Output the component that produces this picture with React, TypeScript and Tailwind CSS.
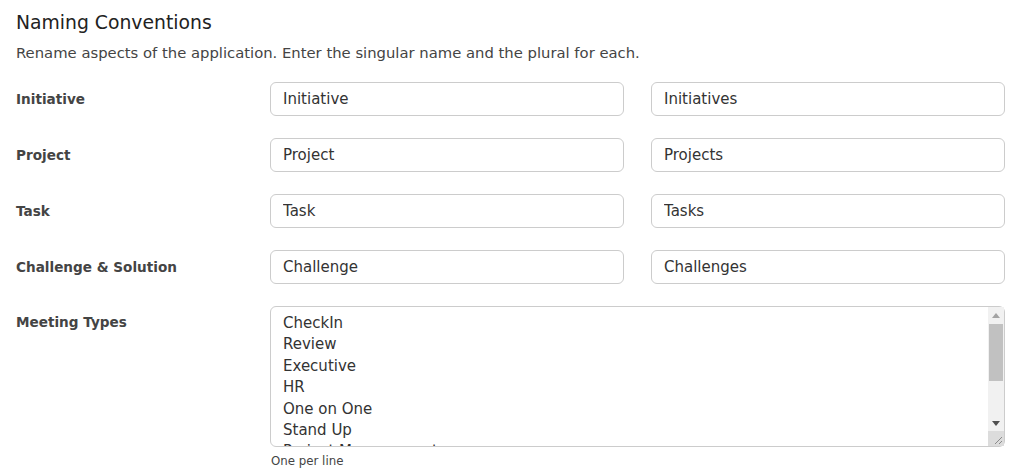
const rows = [
  { label: "Initiative", singular: "Initiative", plural: "Initiatives" },
  { label: "Project", singular: "Project", plural: "Projects" },
  { label: "Task", singular: "Task", plural: "Tasks" },
  { label: "Challenge & Solution", singular: "Challenge", plural: "Challenges" },
]

const meetingTypes = ["CheckIn", "Review", "Executive", "HR", "One on One", "Stand Up", "Project Management", "Board"].join("\n")

// fake classic scrollbar drawn over the textarea's right edge
const Scrollbar = () => (
  <div className="absolute top-px right-px bottom-px flex w-[16px] flex-col bg-[#f1f1f1]">
    <div className="flex h-[16px] items-center justify-center">
      <svg width="8" height="5" viewBox="0 0 8 5"><path d="M0 5 L4 0 L8 5 Z" fill="#a3a3a3" /></svg>
    </div>
    <div className="mx-px mt-[1px] h-[57px] bg-[#c1c1c1]" />
    <div className="flex-1" />
    <div className="flex h-[16px] items-center justify-center">
      <svg width="8" height="5" viewBox="0 0 8 5"><path d="M0 0 L8 0 L4 5 Z" fill="#505050" /></svg>
    </div>
    <div className="relative h-[15px] bg-[#dcdcdc]">
      <svg className="absolute right-[1px] bottom-[1px]" width="10" height="10" viewBox="0 0 10 10">
        <path d="M9 2 L2 9 M9 6 L6 9" stroke="#8a8a8a" strokeWidth="1" />
      </svg>
    </div>
  </div>
)

export default function App() {
  return (
    <div className="min-h-screen bg-white pl-4 pr-[19px] text-[#333]" style={{ fontFamily: '"DejaVu Sans", sans-serif' }}>
      <h2 className="pt-[11px] text-[18.8px] leading-6 text-[#222]">Naming Conventions</h2>
      <p className="mt-[8px] text-[14.8px] leading-5 text-[#444]">
        Rename aspects of the application. Enter the singular name and the plural for each.
      </p>

      <div className="mt-[19px] grid grid-cols-[227px_354px_354px] gap-x-[27px] gap-y-[22px]">
        {rows.map((row) => (
          <div key={row.label} className="contents">
            <label className="flex h-[34px] items-center text-[13.6px] font-bold text-[#444]">{row.label}</label>
            <input
              defaultValue={row.singular}
              className="h-[34px] w-full min-w-0 rounded-md border border-[#ccc] px-3 text-[15px] text-[#333] outline-none"
            />
            <input
              defaultValue={row.plural}
              className="h-[34px] w-full min-w-0 rounded-md border border-[#ccc] px-3 text-[15px] text-[#333] outline-none"
            />
          </div>
        ))}

        <label className="pt-[6px] text-[13.6px] font-bold leading-5 text-[#444]">Meeting Types</label>
        <div className="col-span-2">
          <div className="relative">
            <textarea
              defaultValue={meetingTypes}
              className="block h-[141px] w-full resize-none overflow-hidden rounded-md border border-[#ccc] pt-[6px] pr-[28px] pl-3 text-[15px] leading-[21.4px] text-[#333] outline-none"
            />
            <Scrollbar />
          </div>
          <div className="mt-[6px] pl-px text-[11.8px] text-[#444]">One per line</div>
        </div>
      </div>
    </div>
  )
}
